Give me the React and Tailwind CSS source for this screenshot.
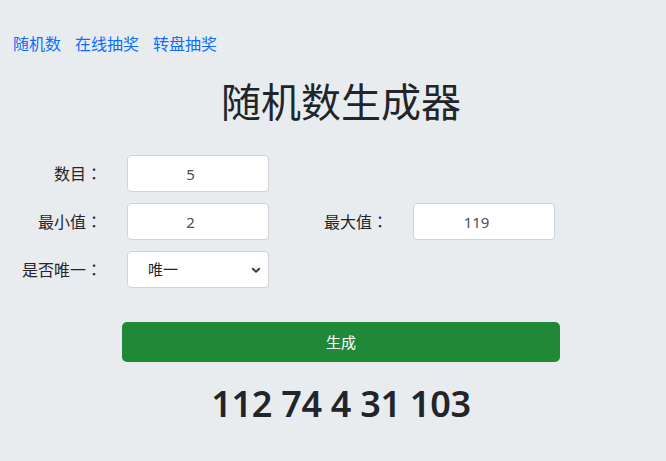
export default function App() {
  const font = { fontFamily: '"Noto Sans", "Noto Sans CJK SC", sans-serif' };
  const inputCls =
    "w-[142px] h-[37px] bg-white border border-[#ced4da] rounded-[4px] text-center pr-[15px] text-[15px] text-[#495057] outline-none";
  const Colon = () => <span className="font-['Noto_Sans_CJK_JP']">：</span>;

  return (
    <div className="min-h-[461px] w-full bg-[#e9ecef] text-[#212529] overflow-hidden" style={font}>
      {/* nav links */}
      <nav className="flex gap-[14px] pl-[13px] pt-[32px] text-[16px] leading-[24px] text-[#0d6efd]">
        <a href="#">随机数</a>
        <a href="#">在线抽奖</a>
        <a href="#">转盘抽奖</a>
      </nav>

      <div className="w-[438px] ml-[122px] mt-[22px]">
        <h1 className="text-center text-[40px] leading-[48px] font-normal">随机数生成器</h1>
      </div>

      {/* form */}
      <div className="mt-[29px] flex flex-col gap-[11px] text-[16px]">
        <div className="flex items-center">
          <label className="w-[102px] text-right">数目<Colon /></label>
          <input className={`ml-[25px] ${inputCls}`} defaultValue="5" />
        </div>
        <div className="flex items-center">
          <label className="w-[102px] text-right">最小值<Colon /></label>
          <input className={`ml-[25px] ${inputCls}`} defaultValue="2" />
          <label className="w-[119px] text-right">最大值<Colon /></label>
          <input className={`ml-[25px] ${inputCls}`} defaultValue="119" />
        </div>
        <div className="flex items-center">
          <label className="w-[102px] text-right">是否唯一<Colon /></label>
          <div className="relative ml-[25px] w-[142px] h-[37px]">
            <select className="w-full h-full appearance-none bg-white border border-[#ced4da] rounded-[4px] pl-[20px] text-[15px] text-[#212529] outline-none">
              <option>唯一</option>
              <option>不唯一</option>
            </select>
            <svg
              className="absolute right-[8px] top-1/2 -translate-y-1/2 pointer-events-none"
              width="10"
              height="10"
              viewBox="0 0 16 16"
              fill="none"
              stroke="#343a40"
              strokeWidth="3"
              strokeLinecap="round"
              strokeLinejoin="round"
            >
              <path d="M3 6l5 5 5-5" />
            </svg>
          </div>
        </div>
      </div>

      <div className="w-[438px] ml-[122px] mt-[34px]">
        <button className="w-full h-[40px] bg-[#218838] text-white text-[15px] rounded-[5px]">生成</button>
        <div className="mt-[16px] text-center text-[36px] leading-[52px] font-semibold tracking-[-0.3px] text-[#212529]">
          112 74 4 31 103
        </div>
      </div>
    </div>
  );
}
